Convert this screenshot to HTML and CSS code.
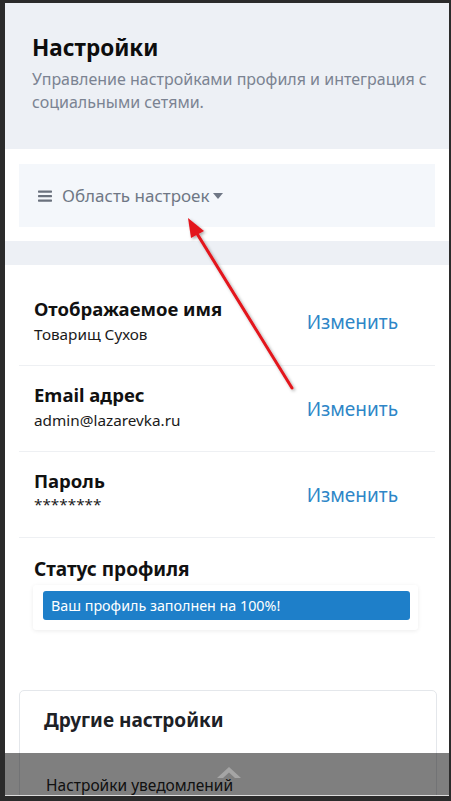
FILE: index.html
```html
<!DOCTYPE html>
<html lang="ru">
<head>
<meta charset="utf-8">
<link rel="stylesheet" href="styles.css">
</head>
<body>
<div class="frame">
  <div class="page">
    <header class="head">
      <h1 class="title">Настройки</h1>
      <p class="subtitle">Управление настройками профиля и интеграция с социальными сетями.</p>
    </header>
    <section class="scope">
      <div class="scope-box">
        <svg class="burger" width="14" height="12" viewBox="0 0 14 12"><rect x="0" y="0.5" width="14" height="2.2" rx="0.6"/><rect x="0" y="5" width="14" height="2.2" rx="0.6"/><rect x="0" y="9.5" width="14" height="2.2" rx="0.6"/></svg>
        <span class="scope-text">Область настроек</span>
        <svg class="caret" width="10" height="6" viewBox="0 0 10 6"><path d="M0 0 H10 L5 6 Z"/></svg>
      </div>
    </section>
    <div class="band"></div>
    <section class="rows">
      <div class="row row-first">
        <div class="row-info">
          <div class="row-title">Отображаемое имя</div>
          <div class="row-value">Товарищ Сухов</div>
        </div>
        <a class="row-btn">Изменить</a>
      </div>
      <div class="row">
        <div class="row-info">
          <div class="row-title">Email адрес</div>
          <div class="row-value">admin@lazarevka.ru</div>
        </div>
        <a class="row-btn">Изменить</a>
      </div>
      <div class="row">
        <div class="row-info">
          <div class="row-title">Пароль</div>
          <div class="row-value pw">********</div>
        </div>
        <a class="row-btn">Изменить</a>
      </div>
      <div class="status">
        <div class="status-title">Статус профиля</div>
        <div class="status-card">
          <div class="status-bar">Ваш профиль заполнен на 100%!</div>
        </div>
      </div>
    </section>
    <section class="other">
      <div class="other-card">
        <div class="other-title">Другие настройки</div>
        <div class="other-item">Настройки уведомлений</div>
      </div>
    </section>
    <div class="scrollbar">
      <svg class="chev" width="24" height="11" viewBox="0 0 24 11"><path d="M0 11 L12 0 L24 11 L18 11 L12 5.5 L6 11 Z"/></svg>
    </div>
    <svg class="arrow" width="444" height="793" viewBox="0 0 444 793">
      <defs>
        <filter id="sh" x="-20%" y="-20%" width="140%" height="140%">
          <feDropShadow dx="1.5" dy="1.5" stdDeviation="1.5" flood-color="#000" flood-opacity="0.35"/>
        </filter>
      </defs>
      <g filter="url(#sh)">
        <line x1="287" y1="385" x2="191" y2="229" stroke="#e3141c" stroke-width="3" stroke-linecap="round"/>
        <path d="M183 215 L199 228 L186 235 Z" fill="#e3141c"/>
      </g>
    </svg>
  </div>
</div>
</body>
</html>
```

FILE: styles.css
```css
* { box-sizing: border-box; }
html, body { margin: 0; padding: 0; }
body {
  background: #2b2b2b;
  font-family: "Noto Sans", "Open Sans", sans-serif;
  color: #111;
}
.frame {
  padding: 3px 2px 5px 5px;
  height: 801px;
}
.page {
  position: relative;
  background: #fff;
  height: 793px;
  overflow: hidden;
}
.head {
  background: #edf0f5;
  padding: 30px 14px 35px 27px;
}
.title {
  margin: 0;
  font-size: 22.5px;
  line-height: 30px;
  font-weight: 700;
  color: #0d0d0d;
}
.subtitle {
  margin: 5px 0 0;
  font-size: 16px;
  line-height: 23px;
  color: #7b8392;
}
.scope {
  padding: 15px 14px 14px;
}
.scope-box {
  background: #f4f7fb;
  height: 63px;
  display: flex;
  align-items: center;
  padding: 0 19px;
  gap: 10px;
}
.burger { fill: #6a717d; }
.scope-text {
  font-size: 17px;
  color: #6f7785;
}
.caret { fill: #6f7785; margin-left: -7px; }
.band {
  height: 24px;
  background: #edf0f5;
}
.rows {
  padding: 0 14px;
}
.row {
  display: flex;
  align-items: center;
  justify-content: space-between;
  height: 86px;
  padding: 0 15px;
  border-bottom: 1px solid #eef0f3;
}
.row-first {
  height: 101px;
  padding-top: 14px;
}
.row-info {
  margin-bottom: 4px;
}
.row-title {
  font-size: 18.5px;
  font-weight: 700;
  line-height: 26px;
}
.row-value {
  font-size: 15.3px;
  line-height: 22px;
  margin-top: 1px;
  color: #1a1a1a;
}
.pw { line-height: 16px; margin-top: 2px; margin-bottom: 6px; }
.row-btn {
  font-size: 19px;
  color: #2e86c7;
  margin-right: 22px;
}
.status {
  padding: 18px 15px 0;
}
.status-title {
  font-size: 19px;
  font-weight: 700;
  line-height: 26px;
}
.status-card {
  margin-top: 3px;
  margin-left: -1px;
  margin-right: 2px;
  padding: 6px 8px 10px 10px;
  background: #fff;
  box-shadow: 0 1px 4px rgba(0,0,0,0.08);
  border-radius: 3px;
}
.status-bar {
  background: #1e7fc9;
  color: #fff;
  border-radius: 3px;
  font-size: 14.3px;
  line-height: 29px;
  padding: 0 8px;
}
.other {
  padding: 60px 12px 0 14px;
}
.other-card {
  border: 1px solid #e4e7eb;
  border-radius: 5px;
  padding: 16px 24px;
}
.other-title {
  font-size: 19px;
  font-weight: 700;
  line-height: 26px;
  color: #1d2126;
}
.other-item {
  margin-top: 41px;
  font-size: 15.5px;
  line-height: 22px;
  color: #222;
  padding-left: 2px;
}
.scrollbar {
  position: absolute;
  left: 0;
  right: 0;
  bottom: 1px;
  height: 42px;
  background: rgba(0,0,0,0.5);
  display: flex;
  justify-content: center;
  padding-top: 14px;
  padding-left: 4px;
}
.page::after {
  content: "";
  position: absolute;
  left: 0; right: 0; bottom: 0;
  height: 1px;
  background: #dcdcdc;
}
.chev { fill: rgba(255,255,255,0.3); }
.arrow {
  position: absolute;
  left: 0;
  top: 0;
  pointer-events: none;
}
```
